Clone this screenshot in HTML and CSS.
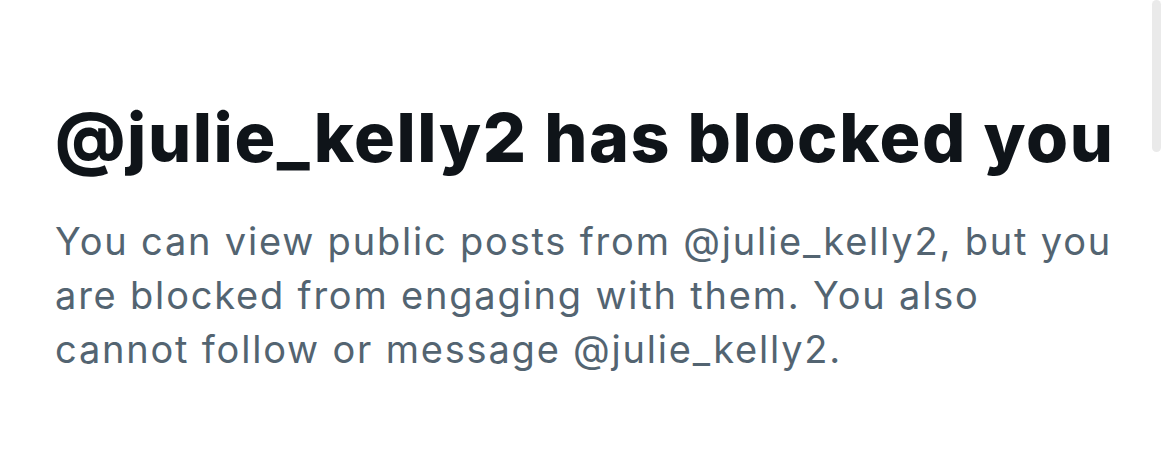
FILE: index.html
```html
<!DOCTYPE html>
<html lang="en">
<head>
<meta charset="utf-8">
<link rel="stylesheet" href="styles.css">
</head>
<body>
<main class="page">
  <h1 class="title">@julie_kelly2 has blocked you</h1>
  <p class="desc">You can view public posts from @julie_kelly2, but you are blocked from engaging with them. You also cannot follow or message @julie_kelly2.</p>
</main>
<div class="scrollbar"></div>
</body>
</html>
```
FILE: styles.css
```css
html, body {
  margin: 0;
  padding: 0;
  background: #ffffff;
}
body {
  width: 1170px;
  height: 475px;
  overflow: hidden;
  position: relative;
  font-family: Inter, "Liberation Sans", sans-serif;
}
.page {
  padding: 97px 0 0 55px;
  width: 1062px;
}
.title {
  margin: 0;
  font-size: 68px;
  line-height: 80px;
  font-weight: 800;
  color: #0f1419;
  letter-spacing: 1.6px;
  white-space: nowrap;
}
.desc {
  margin: 37px 0 0 0;
  font-size: 38px;
  line-height: 54px;
  font-weight: 400;
  color: #536471;
  letter-spacing: 1.8px;
}
.scrollbar {
  position: absolute;
  left: 1152px;
  top: 0;
  width: 9px;
  height: 152px;
  background: #eaeaea;
  border-radius: 5px;
}
```
